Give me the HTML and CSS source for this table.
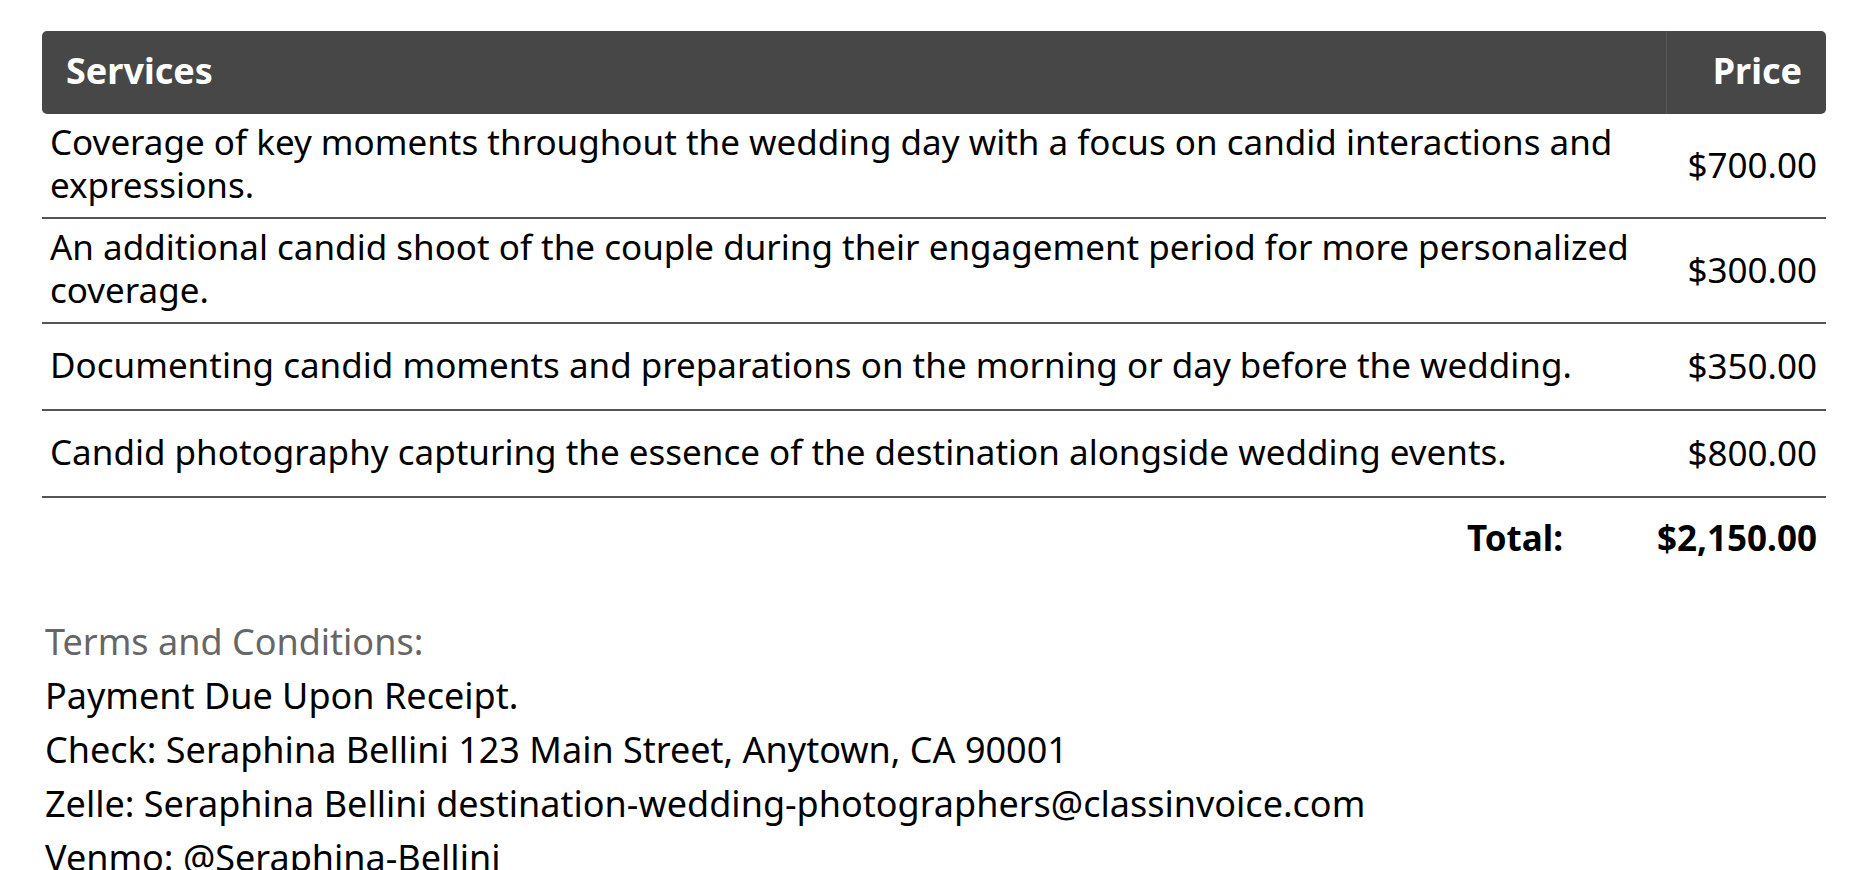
FILE: index.html
```html
<!DOCTYPE html>
<html lang="en">
<head>
<meta charset="utf-8">
<title>Invoice services</title>
<link rel="stylesheet" href="styles.css">
</head>
<body>
<main class="invoice">
  <table class="items">
    <colgroup><col class="col-desc"><col class="col-price"></colgroup>
    <thead>
      <tr><th class="th-desc">Services</th><th class="th-price">Price</th></tr>
    </thead>
    <tbody>
      <tr><td class="desc">Coverage of key moments throughout the wedding day with a focus on candid interactions and expressions.</td><td class="price">$700.00</td></tr>
      <tr><td class="desc">An additional candid shoot of the couple during their engagement period for more personalized coverage.</td><td class="price">$300.00</td></tr>
      <tr><td class="desc">Documenting candid moments and preparations on the morning or day before the wedding.</td><td class="price">$350.00</td></tr>
      <tr><td class="desc">Candid photography capturing the essence of the destination alongside wedding events.</td><td class="price">$800.00</td></tr>
    </tbody>
  </table>
  <div class="total">
    <span class="total-label">Total:</span>
    <span class="total-amount">$2,150.00</span>
  </div>
  <section class="terms">
    <p class="terms-title">Terms and Conditions:</p>
    <p class="terms-line">Payment Due Upon Receipt.</p>
    <p class="terms-line">Check: Seraphina Bellini 123 Main Street, Anytown, CA 90001</p>
    <p class="terms-line">Zelle: Seraphina Bellini destination-wedding-photographers@classinvoice.com</p>
    <p class="terms-line">Venmo: @Seraphina-Bellini</p>
  </section>
</main>
</body>
</html>
```
FILE: styles.css
```css
html, body {
  margin: 0;
  padding: 0;
  background: #ffffff;
}
body {
  font-family: "Noto Sans", "Open Sans", sans-serif;
  font-size: 35px;
  line-height: 43px;
  color: #000000;
}
.invoice {
  padding: 31px 42px 0 42px;
}
.items {
  width: 100%;
  border-collapse: collapse;
  table-layout: fixed;
}
.col-price {
  width: 160px;
}
.items th {
  background: #474747;
  color: #ffffff;
  font-weight: 700;
  font-size: 36px;
  line-height: 43px;
  padding: 18px 24px 22px 24px;
}
.th-desc {
  text-align: left;
  border-radius: 5px 0 0 5px;
}
.th-price {
  text-align: right;
  border-radius: 0 5px 5px 0;
  border-left: 1px solid #575757;
}
.items td {
  border-bottom: 2px solid #555555;
  vertical-align: middle;
}
.desc {
  padding: 6px 8px 11px 8px;
  text-align: left;
}
.price {
  padding: 20px 9px 22px 0;
  text-align: right;
  white-space: nowrap;
}
.total {
  display: flex;
  justify-content: flex-end;
  margin-top: 18px;
  font-weight: 700;
}
.total-amount {
  width: 254px;
  padding-right: 9px;
  text-align: right;
}
.terms {
  margin-top: 60px;
  padding-left: 3px;
  font-size: 36px;
}
.terms p {
  margin: 0 0 11px 0;
}
.terms-title {
  color: #666666;
  padding-top: 1px;
}
```
